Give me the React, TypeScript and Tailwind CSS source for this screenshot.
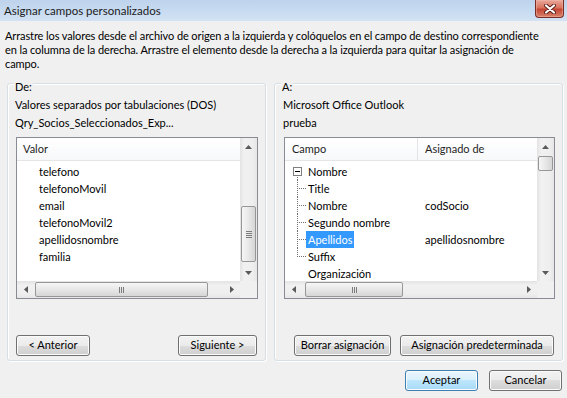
import React from 'react';

type Dir = 'up' | 'down' | 'left' | 'right';

function Tri({ dir }: { dir: Dir }) {
  const vertical = dir === 'up' || dir === 'down';
  const pts = {
    up: '0,4 3.5,0 7,4',
    down: '0,0 7,0 3.5,4',
    left: '4,0 4,7 0,3.5',
    right: '0,0 0,7 4,3.5',
  }[dir];
  return (
    <svg width={vertical ? 7 : 4} height={vertical ? 4 : 7} viewBox={vertical ? '0 0 7 4' : '0 0 4 7'}>
      <polygon points={pts} fill="#5a5a5a" />
    </svg>
  );
}

function VScroll({ thumb, grip }: { thumb: string; grip?: boolean }) {
  return (
    <div className="w-[17px] h-full flex flex-col bg-[linear-gradient(90deg,#e3e3e3,#f1f1f1_25%,#eeeeee_75%,#e6e6e6)]">
      <div className="h-[17px] flex items-center justify-center">
        <Tri dir="up" />
      </div>
      <div className="flex-1 px-[1px]">
        <div
          className={`${thumb} rounded-[2px] border border-[#979797] bg-[linear-gradient(90deg,#f6f6f6,#e9e9e9_45%,#d6d6d6)] flex flex-col items-center justify-center gap-[1px]`}
        >
          {grip && (
            <>
              <div className="w-[6px] h-[1px] bg-[#7c7c7c]" />
              <div className="w-[6px] h-[1px] bg-[#7c7c7c]" />
              <div className="w-[6px] h-[1px] bg-[#7c7c7c]" />
              <div className="w-[6px] h-[1px] bg-[#7c7c7c]" />
            </>
          )}
        </div>
      </div>
      <div className="h-[17px] flex items-center justify-center">
        <Tri dir="down" />
      </div>
    </div>
  );
}

function HScroll({ thumb }: { thumb: string }) {
  return (
    <div className="flex-1 h-[17px] flex bg-[linear-gradient(#e3e3e3,#f1f1f1_25%,#eeeeee_75%,#e6e6e6)]">
      <div className="w-[17px] flex items-center justify-center">
        <Tri dir="left" />
      </div>
      <div className="flex-1 py-[1px]">
        <div
          className={`${thumb} h-full rounded-[2px] border border-[#979797] bg-[linear-gradient(#f6f6f6,#e9e9e9_45%,#d6d6d6)] flex items-center justify-center gap-[1px]`}
        >
          <div className="w-[1px] h-[6px] bg-[#7c7c7c]" />
          <div className="w-[1px] h-[6px] bg-[#7c7c7c]" />
          <div className="w-[1px] h-[6px] bg-[#7c7c7c]" />
        </div>
      </div>
      <div className="w-[17px] flex items-center justify-center">
        <Tri dir="right" />
      </div>
    </div>
  );
}

function Btn({ children, className, primary }: { children: React.ReactNode; className: string; primary?: boolean }) {
  return (
    <div
      className={`${className} h-[21px] flex items-center justify-center rounded-[3px] border shadow-[inset_0_0_0_1px_#fbfbfb] ${
        primary
          ? 'border-[#3c7fb1] bg-[linear-gradient(#eaf6fd,#d9f0fc_50%,#bee6fd_50%,#a7d9f5)]'
          : 'border-[#707070] bg-[linear-gradient(#f2f2f2,#ebebeb_50%,#dddddd_50%,#cfcfcf)]'
      }`}
    >
      {children}
    </div>
  );
}

type Line = 'root' | 'mid' | 'last' | 'none';

// dotted connector pixels, one every other pixel like the Win32 tree view
const vDots = (to: number) => Array.from({ length: Math.ceil(to / 2) }, (_, i) => i * 2);
const hDots = [14, 16, 18, 20];

function TreeLines({ kind }: { kind: Line }) {
  return (
    <svg width="21" height="17" viewBox="0 0 21 17" shapeRendering="crispEdges" className="shrink-0">
      {kind === 'root' && (
        <>
          <rect x="8.5" y="4.5" width="8" height="8" fill="#fff" stroke="#7f7f7f" />
          <rect x="10" y="8" width="5" height="1" fill="#000" />
          {[14, 16].map((y) => (
            <rect key={y} x="12" y={y} width="1" height="1" fill="#6f6f6f" />
          ))}
        </>
      )}
      {(kind === 'mid' || kind === 'last') && (
        <>
          {vDots(kind === 'mid' ? 17 : 9).map((y) => (
            <rect key={y} x="12" y={y} width="1" height="1" fill="#6f6f6f" />
          ))}
          {hDots.map((x) => (
            <rect key={x} x={x} y="8" width="1" height="1" fill="#6f6f6f" />
          ))}
        </>
      )}
    </svg>
  );
}

const leftRows = ['telefono', 'telefonoMovil', 'email', 'telefonoMovil2', 'apellidosnombre', 'familia'];

const rightRows: { campo: string; de?: string; line: Line; selected?: boolean }[] = [
  { campo: 'Nombre', line: 'root' },
  { campo: 'Title', line: 'mid' },
  { campo: 'Nombre', de: 'codSocio', line: 'mid' },
  { campo: 'Segundo nombre', line: 'mid' },
  { campo: 'Apellidos', de: 'apellidosnombre', line: 'mid', selected: true },
  { campo: 'Suffix', line: 'last' },
  { campo: 'Organización', line: 'none' },
];

function GroupBox({ title, width, children }: { title: string; width: string; children: React.ReactNode }) {
  return (
    <div
      className={`${width} h-[278px] rounded-[3px] border border-[#d5dfe5] shadow-[inset_1px_1px_0_#ffffff,1px_1px_0_#ffffff] flex flex-col`}
    >
      <div className="-mt-[6px] ml-[6px] px-[1px] w-fit bg-[#f0f0f0] leading-[17px]">{title}</div>
      {children}
    </div>
  );
}

export default function App() {
  return (
    <div className="w-[567px] h-[398px] overflow-hidden bg-[#f0f0f0] font-['Lato','Noto_Sans',sans-serif] text-[11px] text-black flex flex-col">
      {/* title bar */}
      <div className="h-[21px] shrink-0 flex justify-between bg-[linear-gradient(#bed3ec,#c9dcf1_60%,#d3e2f4)]">
        <span className="pl-[4px] leading-[21px] text-[11.5px] text-[#1b1b1b]">Asignar campos personalizados</span>
        <div className="mr-[3px] w-[29px] h-[18px] rounded-b-[4px] border border-t-0 border-[#7a2b24] bg-[linear-gradient(#eaa89a,#d9735f_45%,#c54634_55%,#d8826b)] shadow-[inset_0_0_0_1px_#f0b7aa80] flex items-center justify-center">
          <svg width="12" height="10" viewBox="0 0 12 10">
            <path d="M2 1.5 L10 8.5 M10 1.5 L2 8.5" stroke="#5b1d16" strokeWidth="4" strokeLinecap="round" />
            <path d="M2 1.5 L10 8.5 M10 1.5 L2 8.5" stroke="#ffffff" strokeWidth="2.2" strokeLinecap="round" />
          </svg>
        </div>
      </div>

      {/* description */}
      <div className="pl-[5px] pt-[8px] leading-[14px] tracking-[-0.1px]">
        <div>Arrastre los valores desde el archivo de origen a la izquierda y colóquelos en el campo de destino correspondiente</div>
        <div>en la columna de la derecha. Arrastre el elemento desde la derecha a la izquierda para quitar la asignación de</div>
        <div>campo.</div>
      </div>

      {/* panels */}
      <div className="flex mt-[12px] pl-[7px] gap-[8px]">
        <GroupBox title="De:" width="w-[259px]">
          <div className="pl-[7px] leading-[18px] mt-[1px]">Valores separados por tabulaciones (DOS)</div>
          <div className="pl-[7px] leading-[18px]">Qry_Socios_Seleccionados_Exp...</div>
          <div className="ml-[8px] mt-[5px] w-[242px] h-[162px] border border-[#898c95] bg-white flex flex-col">
            <div className="h-[143px] flex">
              <div className="flex-1 overflow-hidden">
                <div className="h-[23px] border-b border-[#e5e5e5] bg-[linear-gradient(#ffffff,#f7f8fa)] flex items-center pl-[6px] text-[#1e1e1e]">
                  Valor
                </div>
                <div className="pt-[2px]">
                  {leftRows.map((r) => (
                    <div key={r} className="h-[17px] leading-[17px] pl-[22px]">
                      {r}
                    </div>
                  ))}
                </div>
              </div>
              <VScroll thumb="mt-[51px] h-[56px]" grip />
            </div>
            <div className="flex">
              <HScroll thumb="ml-[1px] w-[173px]" />
              <div className="w-[17px] h-[17px] bg-[#f0f0f0]" />
            </div>
          </div>
          <div className="flex justify-between pl-[8px] pr-[8px] mt-[36px]">
            <Btn className="w-[74px]">&lt; Anterior</Btn>
            <Btn className="w-[79px]">Siguiente &gt;</Btn>
          </div>
        </GroupBox>

        <GroupBox title="A:" width="w-[289px]">
          <div className="pl-[8px] leading-[18px] mt-[1px]">Microsoft Office Outlook</div>
          <div className="pl-[8px] leading-[18px]">prueba</div>
          <div className="ml-[9px] mt-[5px] w-[271px] h-[162px] border border-[#898c95] bg-white flex flex-col">
            <div className="h-[143px] flex">
              <div className="flex-1 overflow-hidden">
                <div className="h-[23px] border-b border-[#e5e5e5] bg-[linear-gradient(#ffffff,#f7f8fa)] flex text-[#1e1e1e]">
                  <div className="w-[133px] border-r border-[#e5e5e5] flex items-center pl-[7px]">Campo</div>
                  <div className="flex items-center pl-[7px]">Asignado de</div>
                </div>
                <div className="pt-[2px]">
                  {rightRows.map((r, i) => (
                    <div key={i} className="h-[17px] flex leading-[17px]">
                      <div className="w-[133px] flex">
                        <TreeLines kind={r.line} />
                        <span className={`px-[2px] whitespace-nowrap ${r.selected ? 'bg-[#3399ff] text-white' : ''}`}>
                          {r.campo}
                        </span>
                      </div>
                      <div className="pl-[7px] whitespace-nowrap">{r.de}</div>
                    </div>
                  ))}
                </div>
              </div>
              <VScroll thumb="mt-[1px] h-[15px]" />
            </div>
            <div className="flex">
              <HScroll thumb="ml-[3px] w-[98px]" />
              <div className="w-[17px] h-[17px] bg-[#f0f0f0]" />
            </div>
          </div>
          <div className="flex gap-[9px] pl-[19px] pr-[8px] mt-[36px]">
            <Btn className="w-[97px]">Borrar asignación</Btn>
            <Btn className="w-[154px]">Asignación predeterminada</Btn>
          </div>
        </GroupBox>
      </div>

      {/* dialog buttons */}
      <div className="flex justify-end gap-[11px] pr-[5px] mt-[9px]">
        <Btn className="w-[73px]" primary>
          Aceptar
        </Btn>
        <Btn className="w-[73px]">Cancelar</Btn>
      </div>
    </div>
  );
}
